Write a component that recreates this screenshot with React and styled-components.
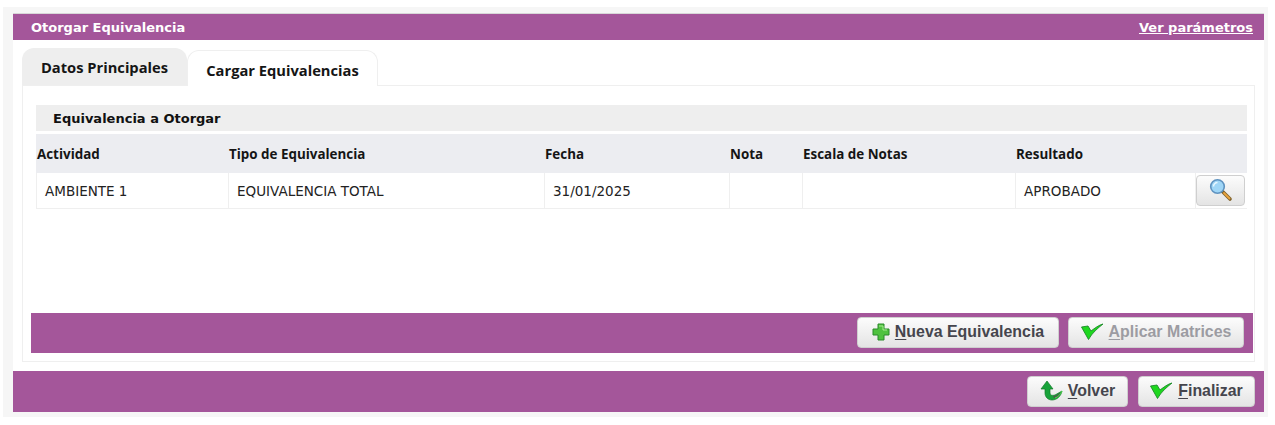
import React from 'react';
import styled, { createGlobalStyle } from 'styled-components';

const GlobalStyle = createGlobalStyle`
  html, body {
    margin: 0;
    padding: 0;
    background: #fff;
  }
`;

const Frame = styled.div`
  width: 1265px;
  height: 410px;
  margin: 7px 0 0 3px;
  padding: 6px 4px 5px 10px;
  box-sizing: border-box;
  background: #f6f6f6;
  font-family: 'DejaVu Sans', sans-serif;
`;

const Win = styled.div`
  width: 1251px;
  height: 399px;
  background: #fff;
  display: flex;
  flex-direction: column;
`;

const TitleBar = styled.div`
  height: 27px;
  flex: none;
  background: #a4569a;
  border-top: 1px solid #d8d8d8;
  box-sizing: border-box;
  display: flex;
  align-items: center;
  justify-content: space-between;
  padding: 0 11px 0 18px;
  color: #fff;
  font-size: 13px;
  font-weight: 700;
`;

const ParamLink = styled.a`
  color: #fff;
  text-decoration: underline;
`;

const Tabs = styled.div`
  display: flex;
  align-items: flex-end;
  height: 45px;
  flex: none;
  padding-left: 9px;
  box-sizing: border-box;
  font-family: 'Open Sans', sans-serif;
  font-weight: 700;
  font-size: 14.7px;
  color: #151515;
`;

const Tab = styled.div`
  box-sizing: border-box;
  border-radius: 12px 12px 0 0;
  display: flex;
  justify-content: center;
  height: ${p => (p.$active ? '36px' : '37px')};
  width: ${p => (p.$active ? '191px' : '165px')};
  padding-top: 9px;
  background: ${p => (p.$active ? '#fff' : '#eeeeee')};
  border: ${p => (p.$active ? '1px solid #efefef' : 'none')};
  border-bottom: none;
  position: relative;
  margin-bottom: ${p => (p.$active ? '-1px' : '0')};
  z-index: 1;
`;

const Panel = styled.div`
  margin: 0 9px;
  height: 277px;
  flex: none;
  box-sizing: border-box;
  border: 1px solid #efefef;
  padding: 19px 0 8px 8px;
  display: flex;
  flex-direction: column;
`;

const SectionTitle = styled.div`
  height: 26px;
  flex: none;
  margin: 0 7px 0 5px;
  background: #eeeeee;
  display: flex;
  align-items: center;
  padding-left: 17px;
  font-size: 13px;
  font-weight: 700;
  color: #111;
`;

const Table = styled.div`
  margin: 3px 7px 0 5px;
  flex: 1;
`;

const Row = styled.div`
  display: grid;
  grid-template-columns: 192px 316px 185px 73px 213px 180px 1fr;
  height: ${p => (p.$head ? '39px' : '36px')};
  box-sizing: border-box;
  background: ${p => (p.$head ? '#ecedf1' : '#fff')};
  border-bottom: ${p => (p.$head ? 'none' : '1px solid #efefef')};
`;

const HeadCell = styled.div`
  display: flex;
  align-items: center;
  padding-left: 1px;
  font-family: 'Open Sans', sans-serif;
  font-size: 13.4px;
  font-weight: 700;
  color: #151515;
`;

const Cell = styled.div`
  display: flex;
  align-items: center;
  padding-left: 8px;
  font-size: 13.5px;
  color: #222;
  border-left: 1px solid #efefef;
`;

const IconCell = styled.div`
  display: flex;
  align-items: center;
  justify-content: flex-end;
  padding-right: 3px;
  border-left: 1px solid #efefef;
`;

const ActionBar = styled.div`
  height: 40px;
  flex: none;
  box-sizing: border-box;
  margin-right: 1px;
  background: #a4569a;
  display: flex;
  align-items: center;
  justify-content: flex-end;
  gap: 9px;
  padding: 0 9px 1px 0;
`;

const FootBar = styled(ActionBar)`
  height: 41px;
  margin-top: 9px;
  margin-right: 0;
  padding-right: 9px;
  gap: 10px;
`;

const Button = styled.button`
  height: 31px;
  width: ${p => p.$w}px;
  box-sizing: border-box;
  padding: 0 0 1px;
  display: flex;
  align-items: center;
  justify-content: center;
  gap: 5px;
  border: 1px solid #cfcfcf;
  border-radius: 4px;
  background: linear-gradient(#fcfcfc, #e4e4e4);
  font-family: 'Liberation Sans', sans-serif;
  font-size: 15.9px;
  font-weight: 700;
  color: ${p => (p.disabled ? '#9c9ca2' : '#45454d')};

  u {
    text-underline-offset: 2px;
  }
`;

const Plus = () => (
  <svg width="18" height="18" viewBox="0 0 18 18">
    <path d="M6 1h6v5h5v6h-5v5H6v-5H1V6h5z" fill="#4fc23f" stroke="#2b8a2b" strokeWidth="1" />
    <path d="M7 3h4v4h4" fill="none" stroke="#a5ea90" strokeWidth="1" />
  </svg>
);

const Check = () => (
  <svg width="23" height="18" viewBox="0 0 23 18">
    <path d="M.5 4L7 3l3 5c4-3 8-6 12-7-5 4-11 9-14.500 15.500z" fill="#1ed81f" stroke="#1d8a2a" strokeWidth="0.9" />
  </svg>
);

const Back = () => (
  <svg width="23" height="21" viewBox="0 0 23 21">
    <path d="M7 1l6 8H10v4c0 2 2 3 5 2l7-4c-1 5-5 9-10 9-4 0-7-3-7-7V9H1z" fill="#17a33a" stroke="#137a2a" strokeWidth="0.7" />
    <path d="M13 16c3 0 6-2 8-4-1 3-3 6-7 6z" fill="#4d5a4d" />
    <path d="M15 18c3-1 5-3 7-7" fill="none" stroke="#4fe04a" strokeWidth="1" />
  </svg>
);

const Lens = () => (
  <svg width="24" height="24" viewBox="0 0 24 24">
    <line x1="13" y1="13" x2="21" y2="21" stroke="#7d5f28" strokeWidth="3.6" strokeLinecap="round" />
    <line x1="15" y1="15" x2="20.5" y2="20.5" stroke="#eba53f" strokeWidth="1.8" strokeLinecap="round" />
    <circle cx="8.5" cy="8.5" r="6.8" fill="#9fd6f7" stroke="#5f93c0" strokeWidth="1.6" />
    <path d="M4.5 8.5a4 4 0 0 1 4-4" fill="none" stroke="#e8f7ff" strokeWidth="1.5" />
  </svg>
);

const headers = ['Actividad', 'Tipo de Equivalencia', 'Fecha', 'Nota', 'Escala de Notas', 'Resultado', ''];
const values = ['AMBIENTE 1', 'EQUIVALENCIA TOTAL', '31/01/2025', '', '', 'APROBADO'];

const App = () => (
  <>
    <GlobalStyle />
    <Frame>
      <Win>
        <TitleBar>
          <span>Otorgar Equivalencia</span>
          <ParamLink href="#">Ver parámetros</ParamLink>
        </TitleBar>
        <Tabs>
          <Tab>Datos Principales</Tab>
          <Tab $active>Cargar Equivalencias</Tab>
        </Tabs>
        <Panel>
          <SectionTitle>Equivalencia a Otorgar</SectionTitle>
          <Table>
            <Row $head>
              {headers.map((h, i) => <HeadCell key={i}>{h}</HeadCell>)}
            </Row>
            <Row>
              {values.map((v, i) => <Cell key={i}>{v}</Cell>)}
              <IconCell>
                <Button $w={49}><Lens /></Button>
              </IconCell>
            </Row>
          </Table>
          <ActionBar>
            <Button $w={202}><Plus /><span><u>N</u>ueva Equivalencia</span></Button>
            <Button $w={176} disabled><Check /><span><u>A</u>plicar Matrices</span></Button>
          </ActionBar>
        </Panel>
        <FootBar>
          <Button $w={101}><Back /><span><u>V</u>olver</span></Button>
          <Button $w={117}><Check /><span><u>F</u>inalizar</span></Button>
        </FootBar>
      </Win>
    </Frame>
  </>
);

export default App;
